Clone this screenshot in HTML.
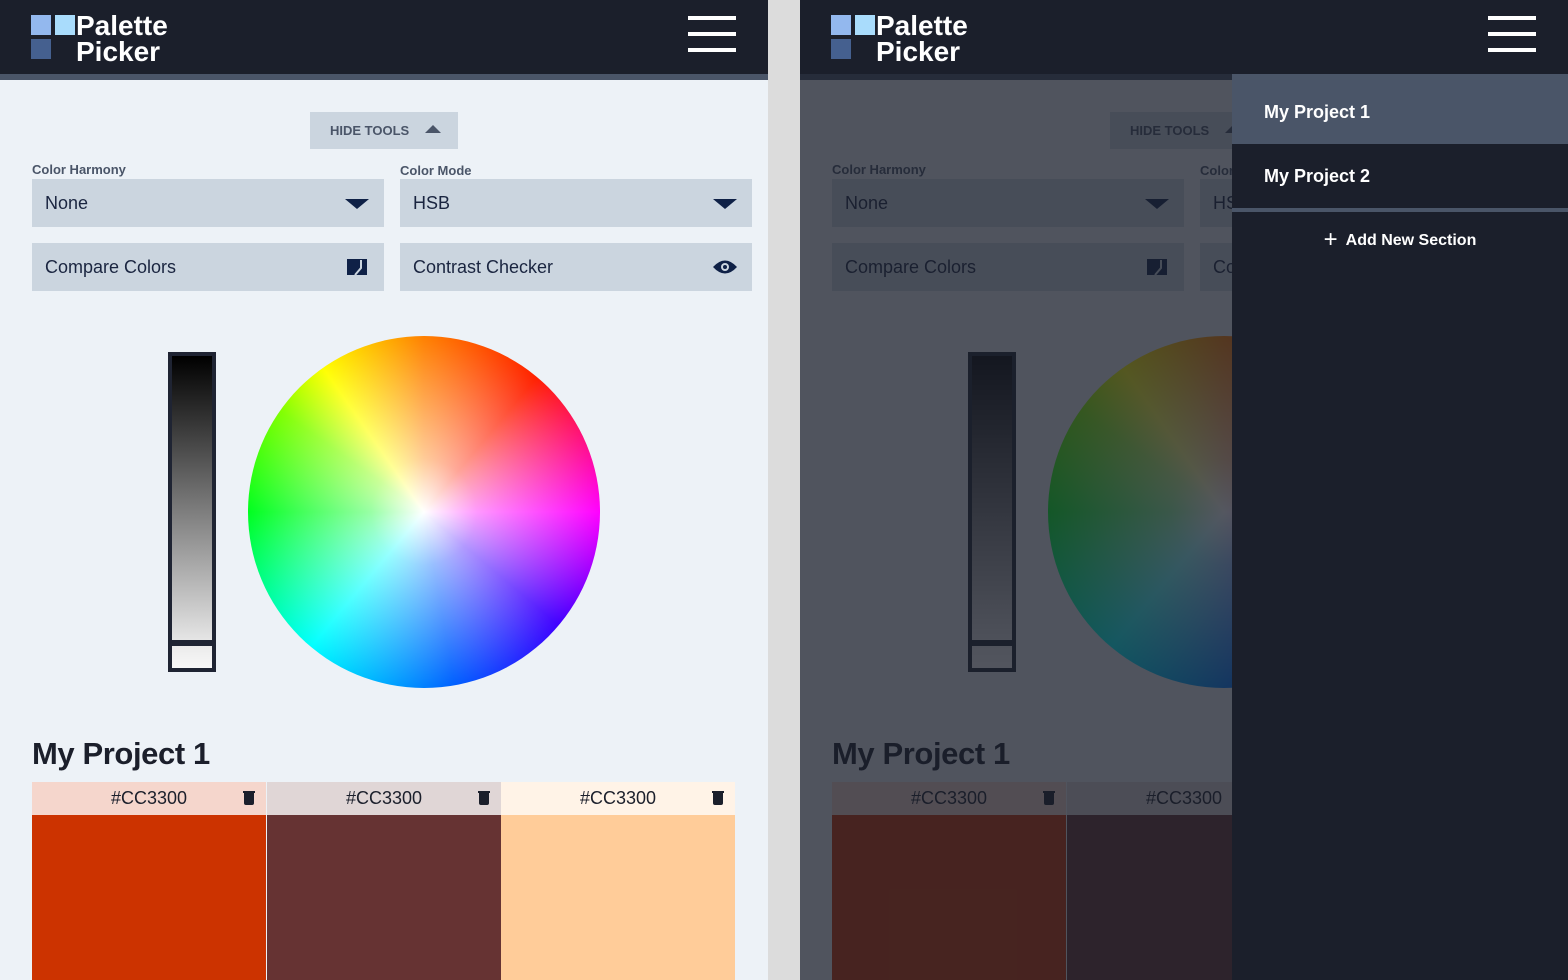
<!DOCTYPE html>
<html><head><style>
*{margin:0;padding:0;box-sizing:border-box}
body{width:1568px;height:980px;overflow:hidden;background:#dcdcdc;font-family:"Liberation Sans",sans-serif;position:relative}
.p{position:absolute;top:0;width:768px;height:980px;background:#edf2f7;overflow:hidden}
.hdr{position:absolute;left:0;top:0;width:768px;height:74px;background:#1b1f2b}
.strip{position:absolute;left:0;top:74px;width:768px;height:6px;background:#4a5568}
.sq{position:absolute;width:20px;height:20px}
.logo{position:absolute;left:76px;color:#fff;font-weight:bold;font-size:28px;line-height:26px;letter-spacing:0}
.burg{position:absolute;left:688px;width:48px;height:4px;background:#fff}
.ab{position:absolute}
.hide{left:310px;top:112px;width:148px;height:37px;background:#cbd5df;color:#4a5568;font-weight:bold;font-size:13px;line-height:37px;padding-left:20px}
.lbl{font-size:13px;font-weight:bold;color:#4a5568}
.box{background:#cbd5df;height:48px;width:352px;font-size:18px;color:#1a2540;line-height:48px;padding-left:13px}
.tri{position:absolute;right:15px;top:20px;width:0;height:0;border-left:12px solid transparent;border-right:12px solid transparent;border-top:10px solid #0f2147}
.bar{left:168px;top:352px;width:48px;height:320px;background:#1f2433;padding:4px}
.wheel{left:248px;top:336px;width:352px;height:352px;border-radius:50%;background:radial-gradient(circle closest-side,#fff 0%,rgba(255,255,255,.6) 30%,rgba(255,255,255,0) 100%),conic-gradient(from 0deg,#ff8000,#ff2000 40deg,#ff00ff 90deg,#4000ff 130deg,#0060ff 170deg,#00ffff 220deg,#00ff20 270deg,#80ff00 305deg,#ffff00 325deg,#ff8000 360deg)}
.h1{left:32px;top:736px;font-size:31px;font-weight:bold;color:#1b1f2b;letter-spacing:-0.4px}
.sw{position:absolute;top:782px;width:234px}
.sh{height:33px;font-size:18px;line-height:33px;text-align:center;color:#1b1f2b;position:relative}
.tr{position:absolute;right:12px;top:10px;width:10px;height:13px;background:#1b1f2b;border-radius:0 0 2px 2px}
.tr:before{content:"";position:absolute;left:-1px;top:-1px;width:12px;height:2px;background:#1b1f2b}
.sc{height:200px}
.ov{position:absolute;left:0;top:74px;width:768px;height:906px;background:rgba(27,31,43,.75)}
</style></head><body>

<div class="p" style="left:0">
<div class="hdr"></div><div class="strip"></div>
<div class="sq" style="left:31px;top:15px;background:#93b8ee"></div>
<div class="sq" style="left:55px;top:15px;background:#a9dcfc"></div>
<div class="sq" style="left:31px;top:39px;background:#45608f"></div>
<div class="logo" style="top:13px">Palette<br>Picker</div>
<div class="burg" style="top:16px"></div><div class="burg" style="top:32px"></div><div class="burg" style="top:48px"></div>
<div class="ab hide">HIDE TOOLS <span style="display:inline-block;margin-left:12px;width:0;height:0;border-left:8px solid transparent;border-right:8px solid transparent;border-bottom:8px solid #4a5568;vertical-align:2px"></span></div>
<div class="ab lbl" style="left:32px;top:162px">Color Harmony</div>
<div class="ab lbl" style="left:400px;top:163px">Color Mode</div>
<div class="ab box" style="left:32px;top:179px">None<div class="tri"></div></div>
<div class="ab box" style="left:400px;top:179px">HSB<div class="tri"></div></div>
<div class="ab box" style="left:32px;top:243px">Compare Colors<svg style="position:absolute;right:17px;top:16px" width="20" height="16"><rect width="20" height="16" fill="#0f2147"/><path d="M14 1 V9 L8 16" stroke="#cbd5df" stroke-width="2" fill="none"/></svg></div>
<div class="ab box" style="left:400px;top:243px">Contrast Checker<svg style="position:absolute;right:15px;top:17px" width="24" height="14"><path d="M0 7 Q12 -6 24 7 Q12 20 0 7Z" fill="#0f2147"/><circle cx="12" cy="7" r="4" fill="#cbd5df"/><circle cx="12" cy="7" r="2" fill="#0f2147"/></svg></div>
<div class="ab bar"><div style="height:284px;background:linear-gradient(#000,#e5e5e5)"></div><div style="height:6px"></div><div style="height:22px;background:linear-gradient(#ebebeb,#f8f8f8)"></div></div>
<div class="ab wheel"></div>
<div class="ab h1">My Project 1</div>
<div class="sw" style="left:32px"><div class="sh" style="background:#f5d6cc">#CC3300<div class="tr"></div></div><div class="sc" style="background:#cc3300"></div></div>
<div class="sw" style="left:267px"><div class="sh" style="background:#e0d6d6">#CC3300<div class="tr"></div></div><div class="sc" style="background:#663333"></div></div>
<div class="sw" style="left:501px"><div class="sh" style="background:#fff3e7">#CC3300<div class="tr"></div></div><div class="sc" style="background:#ffcc99"></div></div>
</div>

<div class="p" style="left:800px">
<div class="strip"></div>
<div class="ab hide">HIDE TOOLS <span style="display:inline-block;margin-left:12px;width:0;height:0;border-left:8px solid transparent;border-right:8px solid transparent;border-bottom:8px solid #4a5568;vertical-align:2px"></span></div>
<div class="ab lbl" style="left:32px;top:162px">Color Harmony</div>
<div class="ab lbl" style="left:400px;top:163px">Color Mode</div>
<div class="ab box" style="left:32px;top:179px">None<div class="tri"></div></div>
<div class="ab box" style="left:400px;top:179px">HSB<div class="tri"></div></div>
<div class="ab box" style="left:32px;top:243px">Compare Colors<svg style="position:absolute;right:17px;top:16px" width="20" height="16"><rect width="20" height="16" fill="#0f2147"/><path d="M14 1 V9 L8 16" stroke="#cbd5df" stroke-width="2" fill="none"/></svg></div>
<div class="ab box" style="left:400px;top:243px">Contrast Checker</div>
<div class="ab bar"><div style="height:284px;background:linear-gradient(#000,#e5e5e5)"></div><div style="height:6px"></div><div style="height:22px;background:linear-gradient(#ebebeb,#f8f8f8)"></div></div>
<div class="ab wheel"></div>
<div class="ab h1">My Project 1</div>
<div class="sw" style="left:32px"><div class="sh" style="background:#f5d6cc">#CC3300<div class="tr"></div></div><div class="sc" style="background:#cc3300"></div></div>
<div class="sw" style="left:267px"><div class="sh" style="background:#e0d6d6">#CC3300<div class="tr"></div></div><div class="sc" style="background:#663333"></div></div>
<div class="ov"></div>
<div class="hdr"></div>
<div class="sq" style="left:31px;top:15px;background:#93b8ee"></div>
<div class="sq" style="left:55px;top:15px;background:#a9dcfc"></div>
<div class="sq" style="left:31px;top:39px;background:#45608f"></div>
<div class="logo" style="top:13px">Palette<br>Picker</div>
<div class="burg" style="top:16px"></div><div class="burg" style="top:32px"></div><div class="burg" style="top:48px"></div>
<div class="ab" style="left:432px;top:74px;width:336px;height:906px;background:#1b1f2b">
 <div style="height:70px;background:#4a5568;color:#fff;font-weight:bold;font-size:18px;line-height:76px;padding-left:32px">My Project 1</div>
 <div style="height:64px;color:#fff;font-weight:bold;font-size:18px;line-height:64px;padding-left:32px">My Project 2</div>
 <div style="height:4px;background:#4a5568"></div>
 <div style="height:56px;color:#fff;font-weight:bold;font-size:16px;line-height:56px;text-align:center">
 <span style="font-weight:normal;font-size:24px;vertical-align:-2px;margin-right:8px">+</span>Add New Section</div>
</div>
</div>
</body></html>
